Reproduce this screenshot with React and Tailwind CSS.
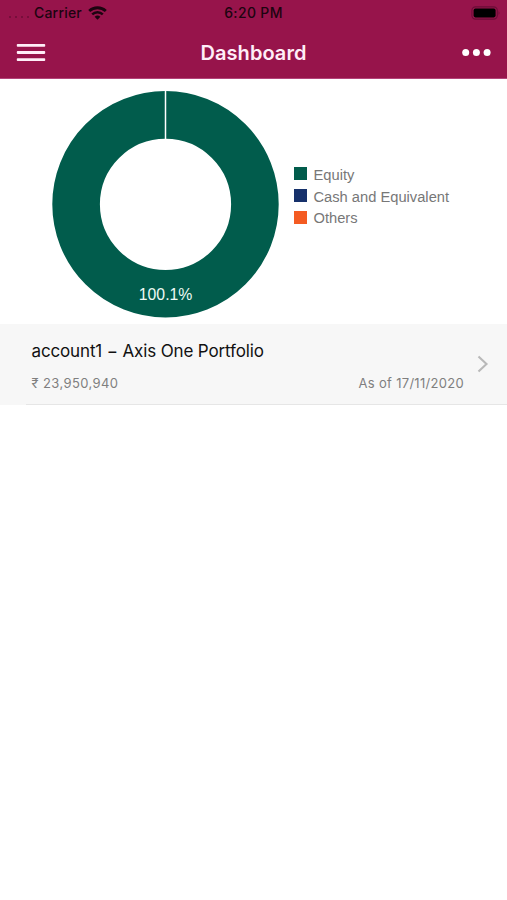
import React from "react";

const legend = [
  { label: "Equity", swatch: "bg-[#015c4c]" },
  { label: "Cash and Equivalent", swatch: "bg-[#16316b]" },
  { label: "Others", swatch: "bg-[#f45b22]" },
];

function StatusBar() {
  return (
    <div className="grid h-[26px] grid-cols-3 items-center text-[14px] leading-[26px] font-medium text-[#1c0410]">
      <div className="flex items-center pl-[9px]">
        <div className="mt-[8px] mr-[5px] flex w-[20px] justify-between">
          <span className="size-[2px] rounded-full bg-[#6d0d36]" />
          <span className="size-[2px] rounded-full bg-[#6d0d36]" />
          <span className="size-[2px] rounded-full bg-[#6d0d36]" />
          <span className="size-[2px] rounded-full bg-[#6d0d36]" />
        </div>
        <span className="tracking-[0.2px]">Carrier</span>
        <svg className="ml-[6px] h-[14px] w-[19px]" viewBox="0 0 19 14" fill="none" stroke="#1c0410">
          <path d="M1.2 5.1A12 12 0 0 1 17.8 5.1" strokeWidth="2.8" />
          <path d="M4.2 8.3A7.6 7.6 0 0 1 14.8 8.3" strokeWidth="2.5" />
          <path d="M9.5 13.7L6.6 10.8A4.2 4.2 0 0 1 12.4 10.8Z" fill="#1c0410" stroke="none" />
        </svg>
      </div>
      <div className="text-center tracking-[0.35px]">6:20 PM</div>
      <div className="flex items-center justify-end pr-[6px]">
        <svg className="h-[14px] w-[30px]" viewBox="0 0 30 14">
          <rect x="0.9" y="0.9" width="25.4" height="12.2" rx="3.6" fill="none" stroke="#6b0d37" strokeWidth="1.1" />
          <rect x="2.6" y="2.6" width="22" height="8.8" rx="1.8" fill="#000" />
          <path d="M27.6 4.8Q29.4 7 27.6 9.2Z" fill="#6b0d37" />
        </svg>
      </div>
    </div>
  );
}

function NavBar() {
  return (
    <div className="grid h-[52px] grid-cols-3 items-center pt-px">
      <svg className="ml-4 h-[20px] w-[30px]" viewBox="0 0 30 20" fill="#ffeef8">
        <rect x="0.8" y="1" width="28.4" height="2.8" rx="0.8" />
        <rect x="0.8" y="8.1" width="28.4" height="2.8" rx="0.8" />
        <rect x="0.8" y="15.2" width="28.4" height="2.8" rx="0.8" />
      </svg>
      <h1 className="text-center text-[20px] font-semibold tracking-[0.05px] text-[#ffeef8]">Dashboard</h1>
      <svg className="mr-4 h-[8px] w-[30px] justify-self-end" viewBox="0 0.8 30 8" fill="#fff">
        <circle cx="4.7" cy="4.4" r="3.5" />
        <circle cx="15.4" cy="4.4" r="3.5" />
        <circle cx="26.1" cy="4.4" r="3.5" />
      </svg>
    </div>
  );
}

function Chart() {
  return (
    <section className="flex h-[245px] pt-[11px] pl-[51px]">
      <svg className="size-[229px] shrink-0" viewBox="51 90 229 229">
        <circle cx="165.5" cy="204.3" r="89.4" fill="none" stroke="#015c4c" strokeWidth="47.6" />
        <path d="M165.5 90V140" stroke="#fff" strokeWidth="1.5" />
        <text
          x="165.6"
          y="300"
          fill="#eefaf5"
          fontSize="15.8"
          textAnchor="middle"
          className="font-['Liberation_Sans',Arial,sans-serif]"
        >
          100.1%
        </text>
      </svg>
      <ul className="mt-[74px] ml-[14px] font-['Liberation_Sans',Arial,sans-serif] text-[14.7px] text-[#777]">
        {legend.map((item) => (
          <li key={item.label} className="flex h-[21.7px] items-center gap-[6.5px]">
            <span className={`-mt-[2px] size-[13px] ${item.swatch}`} />
            <span>{item.label}</span>
          </li>
        ))}
      </ul>
    </section>
  );
}

function AccountRow() {
  return (
    <section className="flex h-[81px] bg-[#f7f7f7]">
      <div className="w-[26px] shrink-0" />
      <div className="flex grow border-b border-[#e6e6e6] pl-[5.5px]">
        <div className="grow">
          <h2 className="mt-[14px] text-[17px] leading-[26px] tracking-[-0.14px] text-[#111]">
            account1 − Axis One Portfolio
          </h2>
          <div className="mt-[9px] flex justify-between text-[13px] leading-[20px] tracking-[0.3px] text-[#7f7f7f]">
            <span className="tracking-[0.4px]">₹ 23,950,940</span>
            <span>As of 17/11/2020</span>
          </div>
        </div>
        <svg className="mt-[31px] mr-[18px] ml-[12px] h-[18px] w-[13px]" viewBox="0 0 13 18" fill="none">
          <path d="M2.5 1.5L10.5 9L2.5 16.5" stroke="#b9b9b9" strokeWidth="2.1" />
        </svg>
      </div>
    </section>
  );
}

export default function App() {
  return (
    <main className="min-h-screen bg-white font-[Inter,sans-serif]">
      <header className="h-[79px] border-b border-[#b34379] bg-[#97144b]">
        <StatusBar />
        <NavBar />
      </header>
      <Chart />
      <AccountRow />
    </main>
  );
}
